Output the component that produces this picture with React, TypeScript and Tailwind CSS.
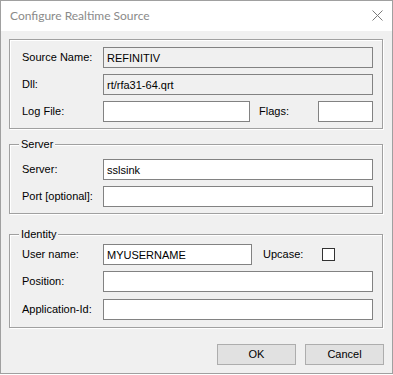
import type { ReactNode } from "react";

const fieldBase = "h-[21px] border border-[#828282] px-[3px] text-[11px] leading-[19px] text-black outline-none";
const editable  = `${fieldBase} bg-white`;
const readonly  = `${fieldBase} bg-[#f0f0f0]`;

// ── group box with etched border + caption ──
function Group({ title, className, children }: { title?: string; className: string; children: ReactNode }) {
  return (
    <div className={`relative ml-2 w-[374px] border border-[#a0a0a0] shadow-[inset_1px_1px_0_#fff,1px_1px_0_#fff] pl-3 pr-[9px] ${className}`}>
      {title && (
        <span className="absolute left-[9px] top-[-7px] bg-[#f0f0f0] px-[2px] leading-[13px]">{title}</span>
      )}
      {children}
    </div>
  );
}

function Row({ label, children, className = "" }: { label: string; children: ReactNode; className?: string }) {
  return (
    <div className={`flex h-[21px] items-center ${className}`}>
      <span className="w-[81px] shrink-0">{label}</span>
      {children}
    </div>
  );
}

export default function App() {
  return (
    <div className="flex h-[374px] w-[393px] flex-col border border-[#a0a0a0] bg-[#f0f0f0] text-[11px] text-black"
      style={{ fontFamily: '"Liberation Sans", Arial, sans-serif' }}>
      {/* Title bar */}
      <div className="flex h-[30px] shrink-0 items-center justify-between bg-white pl-[9px] pr-[9px]">
        <span className="text-[12px] text-[#8a8a8a]" style={{ fontFamily: 'Lato, "Noto Sans", sans-serif' }}>
          Configure Realtime Source
        </span>
        <svg width="11" height="11" viewBox="0 0 11 11" className="mt-[-1px]">
          <path d="M0.5 0.5 L10.5 10.5 M10.5 0.5 L0.5 10.5" stroke="#7a7a7a" strokeWidth="1" fill="none" />
        </svg>
      </div>

      {/* Source */}
      <Group className="mt-2 pt-[7px] pb-[6px]">
        <Row label="Source Name:">
          <input readOnly value="REFINITIV" className={`${readonly} w-[270px]`} />
        </Row>
        <Row label="Dll:" className="mt-[6px]">
          <input readOnly value="rt/rfa31-64.qrt" className={`${readonly} w-[270px]`} />
        </Row>
        <Row label="Log File:" className="mt-[6px]">
          <input className={`${editable} w-[147px]`} />
          <span className="ml-[9px] w-[59px]">Flags:</span>
          <input className={`${editable} w-[55px]`} />
        </Row>
      </Group>

      {/* Server */}
      <Group title="Server" className="mt-[15px] pt-[14px] pb-[6px]">
        <Row label="Server:">
          <input defaultValue="sslsink" className={`${editable} w-[270px]`} />
        </Row>
        <Row label="Port [optional]:" className="mt-[6px]">
          <input className={`${editable} w-[270px]`} />
        </Row>
      </Group>

      {/* Identity */}
      <Group title="Identity" className="mt-[20px] pt-[9px] pb-[7px]">
        <Row label="User name:">
          <input defaultValue="MYUSERNAME" className={`${editable} w-[149px]`} />
          <span className="ml-[11px] w-[59px]">Upcase:</span>
          <span className="h-[13px] w-[13px] border border-[#333333] bg-white" />
        </Row>
        <Row label="Position:" className="mt-[6px]">
          <input className={`${editable} w-[270px]`} />
        </Row>
        <Row label="Application-Id:" className="mt-[7px]">
          <input className={`${editable} w-[270px]`} />
        </Row>
      </Group>

      {/* Buttons */}
      <div className="mt-4 flex justify-end gap-[9px] pr-2">
        <button className="h-[21px] w-[79px] border border-[#adadad] bg-[#e1e1e1] text-[11px]">OK</button>
        <button className="h-[21px] w-[79px] border border-[#adadad] bg-[#e1e1e1] text-[11px]">Cancel</button>
      </div>
    </div>
  );
}
